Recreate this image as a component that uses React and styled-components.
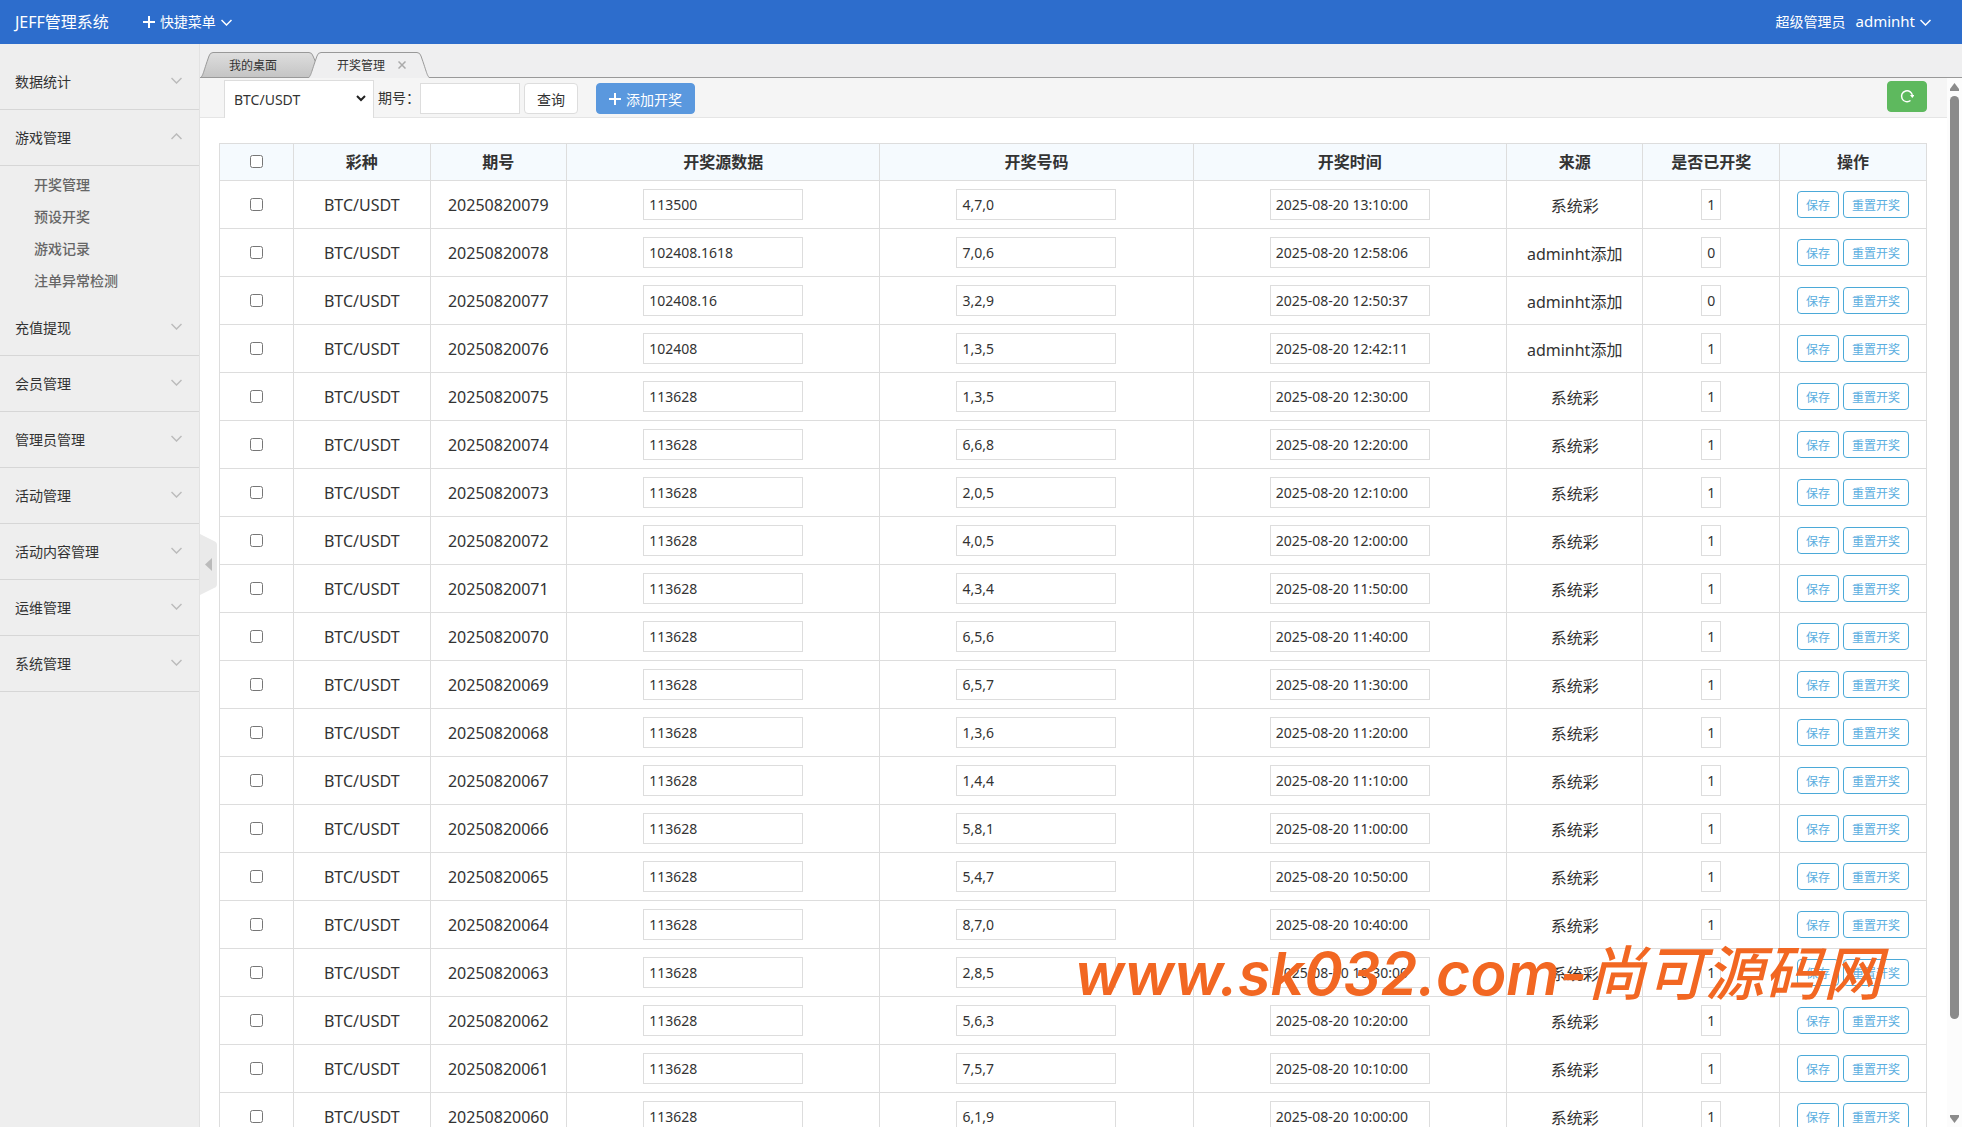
import React, { useState } from 'react'

import styled, { createGlobalStyle } from 'styled-components'

const GlobalStyle = createGlobalStyle`
  * {
    box-sizing: border-box;
  }

  body {
    margin: 0;
    overflow: hidden;
    color: #333;
    background: #fff;
    font-family: "Noto Sans", "Noto Sans CJK SC", sans-serif;
    font-size: 14px;
  }

  button, input, select {
    margin: 0;
    color: inherit;
    font-family: inherit;
    font-size: 14px;
  }
`

const Page = styled.div`
  display: flex;
  flex-direction: column;
  height: 100vh;
`

const Header = styled.header`
  display: flex;
  align-items: center;
  flex: none;
  height: 44px;
  padding: 0 31px 2px 15px;
  color: #fff;
  background: #2d6dcc;
`

const Logo = styled.a`
  margin-right: 34px;
  color: #fff;
  font-size: 16px;
  text-decoration: none;
`

const HeaderButton = styled.button`
  display: flex;
  align-items: center;
  gap: 5px;
  padding: 0;
  border: 0;
  color: #fff;
  background: none;

  svg {
    position: relative;
    top: 1px;
  }
`

const UserArea = styled.div`
  display: flex;
  align-items: center;
  gap: 10px;
  margin-left: auto;
`

const UserButton = styled(HeaderButton)`
  font-size: 15px;
`

const Body = styled.div`
  display: flex;
  flex: 1;
  min-height: 0;
`

const Sidebar = styled.nav`
  flex: none;
  width: 200px;
  padding-top: 10px;
  border-right: 1px solid #e2e2e2;
  background: #eee;
`

const MenuTitle = styled.button`
  display: flex;
  align-items: center;
  justify-content: space-between;
  width: 100%;
  height: 56px;
  padding: 0 17px 2px 15px;
  border: 0;
  border-bottom: 1px solid #d6d6d6;
  background: none;
  text-align: left;
`

const SubMenu = styled.ul`
  margin: 0;
  padding: 3px 0;
  list-style: none;
`

const SubLink = styled.a`
  display: block;
  padding-left: 34px;
  color: #666;
  font-weight: 500;
  line-height: 32px;
  text-decoration: none;
`

const Main = styled.main`
  position: relative;
  display: flex;
  flex: 1;
  flex-direction: column;
  min-width: 0;
`

const TabBar = styled.div`
  display: flex;
  flex: none;
  align-items: flex-end;
  height: 34px;
  border-bottom: 1px solid #999;
  background: #efeff0;
`

const Tab = styled.button`
  position: relative;
  display: flex;
  align-items: center;
  justify-content: space-between;
  width: ${props => (props.$active ? '122px' : '116px')};
  height: 26px;
  margin: 0 -8px -1px 0;
  padding: 0 24px 0 29px;
  border: 0;
  background: none;
  font-size: 12px;
  z-index: ${props => (props.$active ? 1 : 0)};
`

const TabShape = styled.svg`
  position: absolute;
  top: 0;
  left: 0;
  z-index: -1;
`

const FoldButton = styled.button`
  position: absolute;
  top: 490px;
  left: 0;
  width: 17px;
  height: 61px;
  padding: 0;
  border: 0;
  background: none;
  line-height: 0;
  z-index: 2;
`

const Frame = styled.div`
  display: flex;
  flex: 1;
  min-height: 0;
`

const Content = styled.div`
  flex: 1;
  min-width: 0;
  overflow: hidden;
`

const Toolbar = styled.form`
  display: flex;
  align-items: center;
  height: 40px;
  padding: 2px 20px 0 24px;
  border-bottom: 1px solid #e5e5e5;
  background: #f5f5f5;
`

const GameSelect = styled.div`
  position: relative;
  display: flex;
  align-items: center;
  width: 150px;
  height: 38px;
  margin-right: 4px;

  select {
    width: 100%;
    height: 100%;
    padding: 0 9px;
    border: 1px solid #ddd;
    border-bottom: 0;
    background: #fff;
    appearance: none;
  }

  svg {
    position: absolute;
    right: 8px;
    pointer-events: none;
  }
`

const FieldLabel = styled.label`
  padding-bottom: 4px;
`

const TextInput = styled.input`
  width: ${props => props.$width || '160px'};
  height: 31px;
  padding: 0 ${props => (props.$center ? '0' : '5px')};
  border: 1px solid #ddd;
  background: #fff;
  text-align: ${props => (props.$center ? 'center' : 'left')};
  vertical-align: middle;
`

const Button = styled.button`
  display: flex;
  align-items: center;
  justify-content: center;
  gap: 5px;
  height: 31px;
  padding: 0 12px;
  border: 1px solid ${props => props.$color || '#ddd'};
  border-radius: 4px;
  color: ${props => (props.$color ? '#fff' : '#333')};
  background: ${props => props.$color || '#fff'};
`

const SearchButton = styled(Button)`
  margin: 0 18px 0 4px;
`

const RefreshButton = styled(Button)`
  width: 40px;
  margin-left: auto;
  margin-bottom: 5px;
`

const TableArea = styled.div`
  padding: 25px 20px 25px 19px;
`

const Table = styled.table`
  width: 100%;
  border-collapse: collapse;
  table-layout: fixed;
  font-size: 16px;

  th, td {
    height: 48px;
    padding: 0;
    border: 1px solid #ddd;
    text-align: center;
  }

  th {
    height: 37px;
    padding-bottom: 2px;
    background: #f5fafe;
    font-weight: bold;
  }
`

const Check = styled.input`
  display: block;
  width: 13px;
  height: 13px;
  margin: 0 auto;
`

const Actions = styled.div`
  display: flex;
  justify-content: center;
  gap: 4px;
`

const MiniButton = styled.button`
  height: 27px;
  padding: 0 8px;
  border: 1px solid #4ba9d8;
  border-radius: 4px;
  color: #5aaee0;
  background: #fff;
  font-size: 12px;
`

const ScrollTrack = styled.div`
  display: flex;
  flex: none;
  flex-direction: column;
  align-items: center;
  gap: 5px;
  width: 15px;
  padding: 5px 0 4px;
  background: #fcfcfc;
`

const ScrollRun = styled.div`
  flex: 1;
`

const ScrollThumb = styled.div`
  width: 9px;
  height: 91%;
  border-radius: 5px;
  background: #8b8b8b;
`

const Watermark = styled.div`
  position: fixed;
  right: 80px;
  bottom: 113px;
  color: #f26722;
  font-family: Inter, "Noto Sans CJK SC", sans-serif;
  font-size: 59px;
  font-style: italic;
  font-weight: 600;
  line-height: 80px;
  pointer-events: none;
  z-index: 5;
`

const SiteName = styled.span`
  font-weight: 500;
`

const menus = [
  { name: '数据统计' },
  { name: '游戏管理', children: ['开奖管理', '预设开奖', '游戏记录', '注单异常检测'] },
  { name: '充值提现' },
  { name: '会员管理' },
  { name: '管理员管理' },
  { name: '活动管理' },
  { name: '活动内容管理' },
  { name: '运维管理' },
  { name: '系统管理' }
]

const draws = [
  ['20250820079', '113500', '4,7,0', '13:10:00', '系统彩', '1'],
  ['20250820078', '102408.1618', '7,0,6', '12:58:06', 'adminht添加', '0'],
  ['20250820077', '102408.16', '3,2,9', '12:50:37', 'adminht添加', '0'],
  ['20250820076', '102408', '1,3,5', '12:42:11', 'adminht添加', '1'],
  ['20250820075', '113628', '1,3,5', '12:30:00', '系统彩', '1'],
  ['20250820074', '113628', '6,6,8', '12:20:00', '系统彩', '1'],
  ['20250820073', '113628', '2,0,5', '12:10:00', '系统彩', '1'],
  ['20250820072', '113628', '4,0,5', '12:00:00', '系统彩', '1'],
  ['20250820071', '113628', '4,3,4', '11:50:00', '系统彩', '1'],
  ['20250820070', '113628', '6,5,6', '11:40:00', '系统彩', '1'],
  ['20250820069', '113628', '6,5,7', '11:30:00', '系统彩', '1'],
  ['20250820068', '113628', '1,3,6', '11:20:00', '系统彩', '1'],
  ['20250820067', '113628', '1,4,4', '11:10:00', '系统彩', '1'],
  ['20250820066', '113628', '5,8,1', '11:00:00', '系统彩', '1'],
  ['20250820065', '113628', '5,4,7', '10:50:00', '系统彩', '1'],
  ['20250820064', '113628', '8,7,0', '10:40:00', '系统彩', '1'],
  ['20250820063', '113628', '2,8,5', '10:30:00', '系统彩', '1'],
  ['20250820062', '113628', '5,6,3', '10:20:00', '系统彩', '1'],
  ['20250820061', '113628', '7,5,7', '10:10:00', '系统彩', '1'],
  ['20250820060', '113628', '6,1,9', '10:00:00', '系统彩', '1']
]

const Chevron = ({ up, color = '#bbb', width = 11 }) => (
  <svg width={width} height="7" viewBox="0 0 11 7" fill="none" stroke={color} strokeWidth="1.5">
    <path d={up ? 'M.5 6l5-5 5 5' : 'M.5 1l5 5 5-5'} />
  </svg>
)

const Plus = () => (
  <svg width="12" height="12" viewBox="0 0 12 12" stroke="#fff" strokeWidth="2">
    <path d="M6 0v12M0 6h12" />
  </svg>
)

const App = () => {
  const [open, setOpen] = useState('游戏管理')

  return (
    <Page>
      <GlobalStyle />

      <Header>
        <Logo href="#">JEFF管理系统</Logo>
        <HeaderButton>
          <Plus />
          快捷菜单
          <Chevron color="#fff" />
        </HeaderButton>
        <UserArea>
          <span>超级管理员</span>
          <UserButton>
            adminht
            <Chevron color="#fff" />
          </UserButton>
        </UserArea>
      </Header>

      <Body>
        <Sidebar>
          {menus.map(menu => (
            <div key={menu.name}>
              <MenuTitle onClick={() => setOpen(open === menu.name ? '' : menu.name)}>
                {menu.name}
                <Chevron up={!!menu.children && open === menu.name} />
              </MenuTitle>
              {menu.children && open === menu.name && (
                <SubMenu>
                  {menu.children.map(child => (
                    <li key={child}><SubLink href="#">{child}</SubLink></li>
                  ))}
                </SubMenu>
              )}
            </div>
          ))}
        </Sidebar>

        <Main>
          <TabBar>
            <Tab>
              <TabShape width="116" height="26" viewBox="0 0 116 26">
                <defs>
                  <linearGradient id="tab" x1="0" y1="0" x2="0" y2="1">
                    <stop offset="0" stopColor="#dedede" />
                    <stop offset="1" stopColor="#c4c4c4" />
                  </linearGradient>
                </defs>
                <path d="M.5 25.5C3 24 3 21 9 4Q10 .5 13 .5H109Q112 .5 113 4L116 11V25.5Z" fill="url(#tab)" stroke="#999" />
              </TabShape>
              我的桌面
            </Tab>
            <Tab $active>
              <TabShape width="122" height="26" viewBox="0 0 122 26">
                <path d="M.5 25.5C3 24 3 21 9 4Q10 .5 13 .5H109Q112 .5 113 4C119 21 119 24 121.5 25.5" fill="#efeff0" stroke="#999" />
                <path d="M1.5 25.5H120.5" stroke="#efeff0" />
              </TabShape>
              开奖管理
              <svg width="8" height="8" viewBox="0 0 8 8" stroke="#aaa" strokeWidth="1.5">
                <path d="M.5 .5l7 7M7.5 .5l-7 7" />
              </svg>
            </Tab>
          </TabBar>

          <FoldButton aria-label="收起">
            <svg width="17" height="61" viewBox="0 0 17 61">
              <path d="M0 0L14 7Q17 8 17 11V50Q17 53 14 54L0 61Z" fill="#eaeaea" />
              <path d="M5 30.5L12 24V37Z" fill="#bbb" />
            </svg>
          </FoldButton>

          <Frame>
            <Content>
              <Toolbar onSubmit={e => e.preventDefault()}>
                <GameSelect>
                  <select aria-label="彩种">
                    <option>BTC/USDT</option>
                  </select>
                  <svg width="10" height="7" viewBox="0 0 10 7" fill="none" stroke="#222" strokeWidth="2">
                    <path d="M1 1l4 4 4-4" />
                  </svg>
                </GameSelect>
                <FieldLabel htmlFor="issue">期号：</FieldLabel>
                <TextInput id="issue" $width="100px" />
                <SearchButton type="submit">查询</SearchButton>
                <Button type="button" $color="#5a98de">
                  <Plus />
                  添加开奖
                </Button>
                <RefreshButton type="button" $color="#5eb95e" aria-label="刷新">
                  <svg width="14" height="14" viewBox="0 0 14 14" fill="none" stroke="#fff" strokeWidth="1.5">
                    <path d="M10.5 11.5A5.5 5.5 0 1 1 12.5 7" />
                    <path d="M10 6h4.5L12.3 9Z" fill="#fff" stroke="none" />
                  </svg>
                </RefreshButton>
              </Toolbar>

              <TableArea>
                <Table>
                  <colgroup>
                    <col width="74" />
                    <col width="8%" />
                    <col width="8%" />
                    <col />
                    <col />
                    <col />
                    <col width="8%" />
                    <col width="8%" />
                    <col width="147" />
                  </colgroup>
                  <thead>
                    <tr>
                      <th><Check type="checkbox" aria-label="全选" /></th>
                      <th>彩种</th>
                      <th>期号</th>
                      <th>开奖源数据</th>
                      <th>开奖号码</th>
                      <th>开奖时间</th>
                      <th>来源</th>
                      <th>是否已开奖</th>
                      <th>操作</th>
                    </tr>
                  </thead>
                  <tbody>
                    {draws.map(([issue, data, code, time, source, opened]) => (
                      <tr key={issue}>
                        <td><Check type="checkbox" aria-label={issue} /></td>
                        <td>BTC/USDT</td>
                        <td>{issue}</td>
                        <td><TextInput aria-label="开奖源数据" defaultValue={data} /></td>
                        <td><TextInput aria-label="开奖号码" defaultValue={code} /></td>
                        <td><TextInput aria-label="开奖时间" defaultValue={'2025-08-20 ' + time} /></td>
                        <td>{source}</td>
                        <td><TextInput aria-label="是否已开奖" $width="20px" $center defaultValue={opened} /></td>
                        <td>
                          <Actions>
                            <MiniButton>保存</MiniButton>
                            <MiniButton>重置开奖</MiniButton>
                          </Actions>
                        </td>
                      </tr>
                    ))}
                  </tbody>
                </Table>
              </TableArea>
            </Content>

            <ScrollTrack>
              <svg width="9" height="8" viewBox="0 0 9 8"><path d="M4.5 0L9 6V8H0V6Z" fill="#8b8b8b" /></svg>
              <ScrollRun>
                <ScrollThumb />
              </ScrollRun>
              <svg width="9" height="8" viewBox="0 0 9 8"><path d="M4.5 8L9 2V0H0V2Z" fill="#8b8b8b" /></svg>
            </ScrollTrack>
          </Frame>
        </Main>
      </Body>

      <Watermark>www.sk032.com-<SiteName>尚可源码网</SiteName></Watermark>
    </Page>
  )
}

export default App
